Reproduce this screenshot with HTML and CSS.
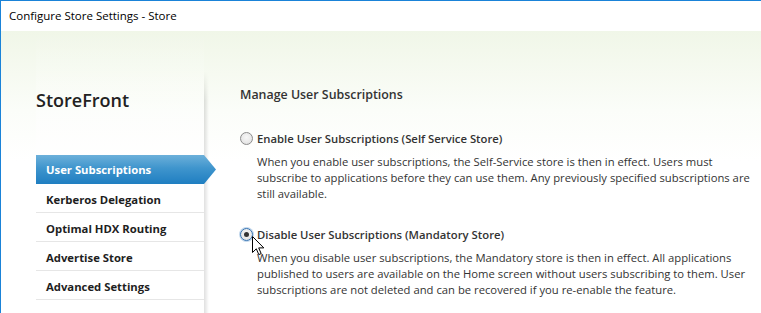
FILE: index.html
```html
<!DOCTYPE html>
<html lang="en">
<head>
  <meta charset="UTF-8" />
  <title>Configure Store Settings - Store</title>
  <link rel="stylesheet" href="styles.css">
</head>
<body>
  <div class="window">
    <div class="titlebar">Configure Store Settings - Store</div>
    <div class="main">
      <aside class="sidebar">
        <h1 class="brand">StoreFront</h1>
        <ul class="nav">
          <li class="nav-item active">User Subscriptions</li>
          <li class="nav-item">Kerberos Delegation</li>
          <li class="nav-item">Optimal HDX Routing</li>
          <li class="nav-item">Advertise Store</li>
          <li class="nav-item">Advanced Settings</li>
        </ul>
      </aside>
      <section class="content">
        <h2 class="section-title">Manage User Subscriptions</h2>

        <div class="option">
          <span class="radio"></span>
          <span class="option-title">Enable User Subscriptions (Self Service Store)</span>
        </div>
        <p class="option-desc">When you enable user subscriptions, the Self-Service store is then in effect. Users must<br>subscribe to applications before they can use them. Any previously specified subscriptions are<br>still available.</p>

        <div class="option option-second">
          <span class="radio checked"></span>
          <span class="option-title">Disable User Subscriptions (Mandatory Store)</span>
        </div>
        <p class="option-desc">When you disable user subscriptions, the Mandatory store is then in effect. All applications<br>published to users are available on the Home screen without users subscribing to them. User<br>subscriptions are not deleted and can be recovered if you re-enable the feature.</p>
      </section>
    </div>

    <!-- mouse pointer hovering the selected radio -->
    <svg class="cursor" width="13" height="20" viewBox="0 0 13 20">
      <path d="M0.5 0.5 L0.5 16.5 L4.3 12.8 L6.8 18.6 L9.2 17.6 L6.7 11.9 L11.8 11.9 Z" fill="#fff" stroke="#000" stroke-width="1" stroke-linejoin="miter" />
    </svg>
  </div>
</body>
</html>
```

FILE: styles.css
```css
* { box-sizing: border-box; }
html, body { margin: 0; padding: 0; }
body { width: 761px; height: 313px; overflow: hidden; font-family: "Open Sans", "Noto Sans", sans-serif; color: #333; }

.window { position: relative; width: 761px; height: 313px; border-top: 1px solid #1a83d8; border-left: 1px solid #1a83d8; background: linear-gradient(to bottom, #ecf4e2 0, #f3f8ec 50px, #fbfdf9 110px, #fff 160px); overflow: hidden; }
.titlebar { height: 30px; line-height: 30px; padding-left: 8px; background: #fff; color: #000; font-size: 11.5px; }

.main { display: flex; height: 282px; }

.sidebar { position: relative; width: 168px; margin-left: 35px; background: linear-gradient(to bottom, rgba(255,255,255,0) 0, rgba(255,255,255,0.5) 120px, #fff 200px); }
.sidebar::after { content: ""; position: absolute; top: 40px; right: -5px; bottom: 0; width: 5px; background: linear-gradient(to right, rgba(0,0,0,0.12), rgba(0,0,0,0)); -webkit-mask-image: linear-gradient(to bottom, transparent 0, #000 30px); mask-image: linear-gradient(to bottom, transparent 0, #000 30px); }
.brand { margin: 58px 0 0; height: 22px; line-height: 22px; font-size: 18px; font-weight: 600; color: #222; }

.nav { list-style: none; margin: 44px 0 0; padding: 0; }
.nav-item { height: 29px; line-height: 31px; padding-left: 10px; border-bottom: 1px solid #e6e6e6; font-size: 11.3px; font-weight: 700; color: #1e1e1e; }
.nav-item.active { position: relative; z-index: 1; width: 180px; line-height: 29px; border-bottom: 0; color: #fff; background: linear-gradient(to bottom, #6cb0da 0, #3f95cd 45%, #1f7ec1 100%); clip-path: polygon(0 0, 168px 0, 180px 50%, 168px 100%, 0 100%); }

.content { padding-left: 36px; }
.section-title { margin: 56px 0 0; line-height: 16px; font-size: 12.4px; font-weight: 600; color: #333; }

.option { display: flex; align-items: center; gap: 4px; margin-top: 27px; height: 16px; }
.option-second { margin-top: 24px; }
.radio { width: 13px; height: 13px; border-radius: 50%; border: 1px solid #8c8c8c; background: radial-gradient(circle at 50% 40%, #f7f7f7 0, #e8e8e8 60%, #d6d6d6 100%); display: flex; align-items: center; justify-content: center; }
.radio.checked { border-color: #2f6fb0; box-shadow: 0 0 0 1px rgba(80,140,200,0.35); }
.radio.checked::after { content: ""; width: 5px; height: 5px; border-radius: 50%; background: #333; }
.option-title { font-size: 11.3px; font-weight: 600; color: #333; }
.option-desc { margin: 8px 0 0; padding-left: 17px; line-height: 16px; font-size: 11.27px; color: #333; white-space: nowrap; }

.cursor { position: absolute; left: 251px; top: 235px; }
```
